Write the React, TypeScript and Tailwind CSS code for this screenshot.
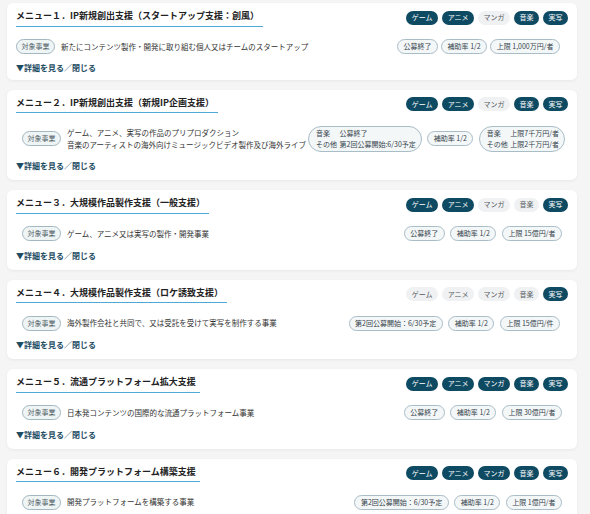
import React from 'react';

type Genre = { name: string; on: boolean };
type Info = string | { rows: [string, string][] };

interface Menu {
  title: string;
  genres: boolean[];
  desc: string[];
  info: Info[];
  rowClass: string;
  infoGap: string;
  toggleClass: string;
}

const GENRE_NAMES = ['ゲーム', 'アニメ', 'マンガ', '音楽', '実写'];

const menus: Menu[] = [
  {
    title: 'メニュー１．IP新規創出支援（スタートアップ支援：創風）',
    genres: [true, true, false, true, true],
    desc: ['新たにコンテンツ製作・開発に取り組む個人又はチームのスタートアップ'],
    info: ['公募終了', '補助率 1/2', '上限 1,000万円/者'],
    rowClass: 'pl-[9px] pr-[17px]',
    infoGap: 'gap-[3px]',
    toggleClass: 'mt-[7.5px] pb-[6px]',
  },
  {
    title: 'メニュー２．IP新規創出支援（新規IP企画支援）',
    genres: [true, true, false, true, true],
    desc: [
      'ゲーム、アニメ、実写の作品のプリプロダクション',
      '音楽のアーティストの海外向けミュージックビデオ製作及び海外ライブ',
    ],
    info: [
      { rows: [['音楽', '公募終了'], ['その他', '第2回公募開始:6/30予定']] },
      '補助率 1/2',
      { rows: [['音楽', '上限7千万円/者'], ['その他', '上限2千万円/者']] },
    ],
    rowClass: 'pl-[15px] pr-[12px]',
    infoGap: 'gap-[5.5px]',
    toggleClass: 'mt-[8.5px] pb-[8px]',
  },
  {
    title: 'メニュー３．大規模作品製作支援（一般支援）',
    genres: [true, true, false, false, true],
    desc: ['ゲーム、アニメ又は実写の製作・開発事業'],
    info: ['公募終了', '補助率 1/2', '上限 15億円/者'],
    rowClass: 'pl-[15px] pr-[15px]',
    infoGap: 'gap-[5.5px]',
    toggleClass: 'mt-[8.5px] pb-[8px]',
  },
  {
    title: 'メニュー４．大規模作品製作支援（ロケ誘致支援）',
    genres: [false, false, false, false, true],
    desc: ['海外製作会社と共同で、又は受託を受けて実写を制作する事業'],
    info: ['第2回公募開始：6/30予定', '補助率 1/2', '上限 15億円/件'],
    rowClass: 'pl-[15px] pr-[17px]',
    infoGap: 'gap-[5.5px]',
    toggleClass: 'mt-[8.5px] pb-[8px]',
  },
  {
    title: 'メニュー５．流通プラットフォーム拡大支援',
    genres: [true, true, true, true, true],
    desc: ['日本発コンテンツの国際的な流通プラットフォーム事業'],
    info: ['公募終了', '補助率 1/2', '上限 30億円/者'],
    rowClass: 'pl-[15px] pr-[15px]',
    infoGap: 'gap-[5.5px]',
    toggleClass: 'mt-[8.5px] pb-[8px]',
  },
  {
    title: 'メニュー６．開発プラットフォーム構築支援',
    genres: [true, true, true, true, true],
    desc: ['開発プラットフォームを構築する事業'],
    info: ['第2回公募開始：6/30予定', '補助率 1/2', '上限 1億円/者'],
    rowClass: 'pl-[15px] pr-[15px]',
    infoGap: 'gap-[5.5px]',
    toggleClass: 'mt-[8.5px] pb-[8px]',
  },
];

const GenreTag: React.FC<Genre> = ({ name, on }) => (
  <span
    className={`h-[14px] px-[5.5px] rounded-full flex items-center text-[7px] leading-none ${
      on ? 'bg-[#0f4a63] text-white' : 'bg-[#f0f1f3] text-[#555b60]'
    }`}
  >
    {name}
  </span>
);

const InfoBadge: React.FC<{ info: Info }> = ({ info }) => {
  if (typeof info === 'string') {
    return (
      <span className="h-[15px] px-[5.5px] rounded-full border border-[#a9bdc7] bg-[#f4f7f8] text-[#34444c] text-[7px] leading-none flex items-center whitespace-nowrap">
        {info}
      </span>
    );
  }
  return (
    <span className="rounded-[13px] border border-[#a9bdc7] bg-[#f4f7f8] text-[#34444c] text-[7px] leading-[11px] py-[1px] pl-[7px] pr-[5px] grid grid-cols-[auto_auto] gap-x-[2.5px] whitespace-nowrap">
      {info.rows.map(([label, value]) => (
        <React.Fragment key={label}>
          <span>{label}</span>
          <span>{value}</span>
        </React.Fragment>
      ))}
    </span>
  );
};

const MenuCard: React.FC<{ menu: Menu }> = ({ menu }) => (
  <div className="bg-white rounded-[6px] shadow-[0_1px_3px_rgba(0,0,0,0.06)]">
    <div className="flex items-center justify-between pt-[6px] px-[9px]">
      <h3 className="inline-block pr-[4px] pb-[3px] border-b-[1.5px] border-[#4fa9d6] text-[9px] leading-[13.5px] font-bold text-[#222]">
        {menu.title}
      </h3>
      <div className="flex gap-1">
        {GENRE_NAMES.map((g, i) => (
          <GenreTag key={g} name={g} on={menu.genres[i]} />
        ))}
      </div>
    </div>

    <div className={`flex items-center justify-between mt-[12.5px] ${menu.rowClass}`}>
      <div className="flex items-center gap-[6px]">
        <span className="h-[15px] px-[4.5px] rounded-full border border-[#a3b7c1] bg-[#eff4f5] text-[#4f5f67] text-[7px] leading-none flex items-center shrink-0">
          対象事業
        </span>
        <div className="text-[7.5px] leading-[12px] text-[#333]">
          {menu.desc.map((d) => (
            <div key={d}>{d}</div>
          ))}
        </div>
      </div>
      <div className={`flex items-center ${menu.infoGap}`}>
        {menu.info.map((info, i) => (
          <InfoBadge key={i} info={info} />
        ))}
      </div>
    </div>

    <div className={`pl-[9px] text-[8px] leading-[12px] font-bold text-[#1d4c63] ${menu.toggleClass}`}>
      ▼詳細を見る／閉じる
    </div>
  </div>
);

export default function App() {
  return (
    <div
      className="min-h-screen bg-[#f5f5f5] pt-[3px] pl-[7px] pr-[13px] pb-4 flex flex-col gap-[10px]"
      style={{ fontFamily: '"Noto Sans CJK JP", "Noto Sans", sans-serif' }}
    >
      {menus.map((m) => (
        <MenuCard key={m.title} menu={m} />
      ))}
    </div>
  );
}
